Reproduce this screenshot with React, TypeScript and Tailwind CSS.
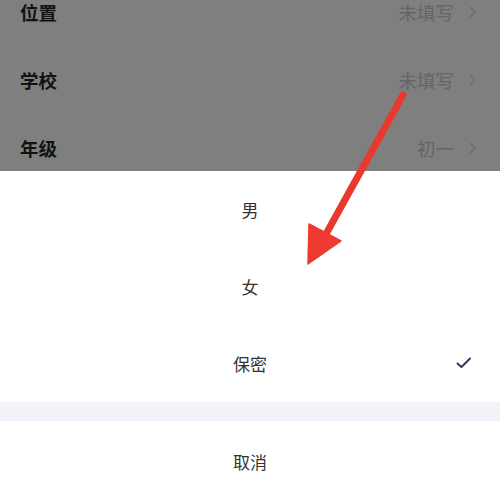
import React from "react";

const font = { fontFamily: '"Noto Sans CJK SC", "Noto Sans", sans-serif' };

function Chevron() {
  return (
    <svg width="8" height="12" viewBox="0 0 8 12" className="ml-[15px] shrink-0">
      <path d="M1.5 1.5 L6 6 L1.5 10.5" fill="none" stroke="#6a6a6a" strokeWidth="1.4" strokeLinecap="round" strokeLinejoin="round" />
    </svg>
  );
}

function InfoRow({ label, value }: { label: string; value: string }) {
  return (
    <div className="flex h-[68px] shrink-0 items-center pl-[20px] pr-[23px]">
      <span className="text-[18.5px] font-bold text-[#121212] leading-none">{label}</span>
      <span className="ml-auto text-[18.5px] text-[#656565] leading-none">{value}</span>
      <Chevron />
    </div>
  );
}

function Option({ label, checked }: { label: string; checked?: boolean }) {
  return (
    <div className="relative flex h-[77px] shrink-0 items-center justify-center">
      <span className="text-[17px] text-[#333333] leading-none">{label}</span>
      {checked && (
        <svg width="16" height="12" viewBox="0 0 16 12" className="absolute right-[28px] top-[32px]">
          <path d="M1.5 6.5 L5.5 10 L14 1.5" fill="none" stroke="#2d3b58" strokeWidth="2" strokeLinecap="round" strokeLinejoin="round" />
        </svg>
      )}
    </div>
  );
}

export default function App() {
  return (
    <div className="relative h-[500px] w-[500px] overflow-hidden bg-white" style={font}>
      <div className="h-[171px] overflow-hidden bg-[#7f7f7f]">
        <div className="-mt-[22px] flex flex-col">
          <InfoRow label="位置" value="未填写" />
          <InfoRow label="学校" value="未填写" />
          <InfoRow label="年级" value="初一" />
        </div>
      </div>
      <div className="flex flex-col">
        <Option label="男" />
        <Option label="女" />
        <Option label="保密" checked />
        <div className="h-[19px] shrink-0 bg-[#f1f3f8]" />
        <div className="flex h-[80px] shrink-0 items-center justify-center">
          <span className="text-[17px] text-[#333333] leading-none">取消</span>
        </div>
      </div>
      <svg className="pointer-events-none absolute left-0 top-0" width="500" height="500" viewBox="0 0 500 500">
        <line x1="403" y1="95" x2="326" y2="234" stroke="#e8392f" strokeWidth="7" strokeLinecap="round" />
        <polygon points="309,224 341,241 308,264" fill="#ee3a30" stroke="#ee3a30" strokeWidth="1.5" strokeLinejoin="round" />
      </svg>
    </div>
  );
}
